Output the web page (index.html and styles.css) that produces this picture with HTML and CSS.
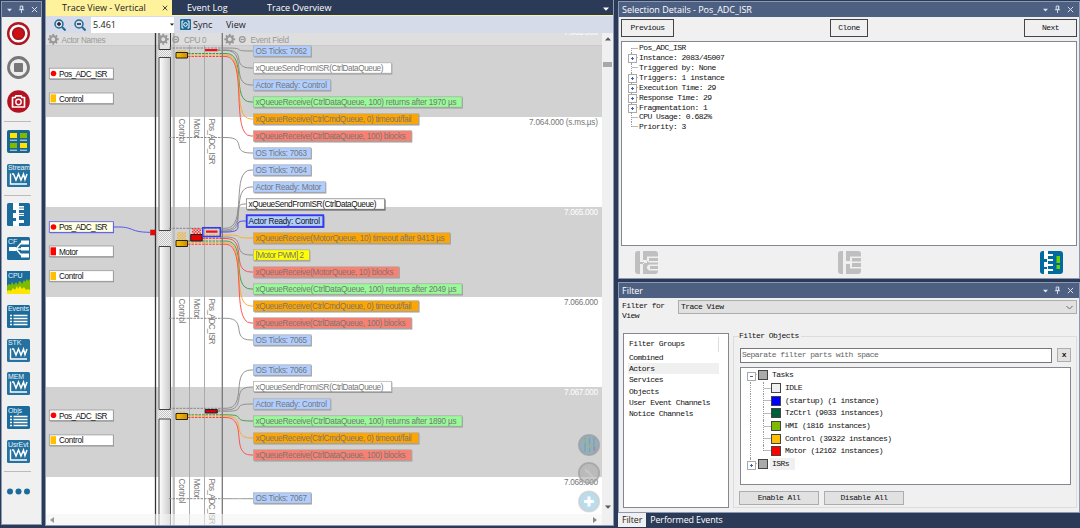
FILE: index.html
```html
<!DOCTYPE html>
<html lang="en">
    <head>
        <meta charset="utf-8">
        <title>Trace View</title>
        <link rel="stylesheet" href="styles.css">
    </head>
    <body>
        <svg class="defs" width="0" height="0">
            <symbol id="pin" viewBox="0 0 8 10"><path d="M2.5 1h3v4h-3zM1 5.3h6M4 5.3V9" fill="none" stroke="currentColor"/><path d="M5 1v4" stroke="currentColor"/></symbol>
            <symbol id="cross" viewBox="0 0 8 8"><path d="M1 1l6 6M7 1L1 7" fill="none" stroke="currentColor" stroke-width="1.1"/></symbol>
            <symbol id="down" viewBox="0 0 6 4"><path d="M0 .5h6L3 3.7z" fill="currentColor"/></symbol>
            <symbol id="gear" viewBox="-6 -6 12 12">
                <circle r="3.1" fill="none" stroke="#999" stroke-width="2.2"/>
                <path d="M0-5.7V-3.5M0 5.7V3.5M-5.7 0H-3.5M5.7 0H3.5M-4-4l1.5 1.5M4 4L2.5 2.5M-4 4l1.5-1.5M4-4L2.5-2.5" stroke="#999" stroke-width="1.9"/>
            </symbol>
            <symbol id="wave" viewBox="0 0 23 23">
                <rect width="23" height="23" rx="1.5" fill="#25719f"/>
                <path d="M3.500 9.500v10.500h16.500" fill="none" stroke="#fff" stroke-width="1.4"/>
                <path d="M5 10h1.500l2.500 6 2.500-6 2.500 6 2.500-6 1.500 5.500 2-5.500" fill="none" stroke="#fff" stroke-width="1.5"/>
            </symbol>
            <symbol id="lines" viewBox="0 0 23 23">
                <rect width="23" height="23" rx="1.5" fill="#1b6c9c"/>
                <path d="M3 10.500h2M3 13.500h2M3 16.500h2M3 19.500h2M6.500 10.500h14M6.500 13.500h14M6.500 16.500h14M6.500 19.500h14" stroke="#fff" stroke-width="1.5"/>
            </symbol>
        </svg>

        <aside class="toolbar">
            <div class="titlebar">
                <svg width="5" height="4"><use href="#down"/></svg>
                <svg width="7" height="9"><use href="#pin"/></svg>
                <svg width="7" height="7"><use href="#cross"/></svg>
            </div>
            <div class="tool"><svg viewBox="0 0 23 23"><circle cx="11.500" cy="11.500" r="10.300" fill="#fff" stroke="#b01622" stroke-width="2.400"/><circle cx="11.500" cy="11.500" r="5.700" fill="#d00f14" stroke="#a01520" stroke-width="1.800"/></svg></div>
            <div class="tool"><svg viewBox="0 0 23 23"><circle cx="11.500" cy="11.500" r="10" fill="#eee" stroke="#777" stroke-width="2.800"/><rect x="7" y="7" width="9" height="9" rx="1" fill="#777"/></svg></div>
            <div class="tool"><svg viewBox="0 0 23 23"><circle cx="11.500" cy="11.500" r="11.300" fill="#b31220"/><path d="M5.500 7.500H8l1-1.700h5l1 1.700h2.500V17h-12z" fill="none" stroke="#fff" stroke-width="1.700" stroke-linejoin="round"/><circle cx="11.500" cy="12" r="2.700" fill="none" stroke="#fff" stroke-width="1.400"/></svg></div>
            <hr>
            <div class="tool"><svg viewBox="0 0 23 23"><rect width="23" height="23" rx="2" fill="#1b668f"/><path d="M3 3h7v5H3zM13 13h7v5h-7z" fill="#ffe500"/><path d="M13 3h7v5h-7zM3 13h7v5H3z" fill="#7fba00"/><path d="M3 10.200h7M13 10.200h7M3 20.200h7M13 20.200h7" stroke="#d5e6ef"/></svg></div>
            <div class="tool"><svg><use href="#wave"/></svg><span>Stream</span></div>
            <hr>
            <div class="tool"><svg viewBox="0 0 23 23"><rect width="23" height="23" rx="1.500" fill="#1b6c9c"/><path d="M6 0h6v3h5v4h-5v3h5v3h-5v4h5v3h-5v3H6v-5h3v-3H6v-5h3V7H6z" fill="#fff"/><path d="M12 5h5M12 11.500h5" stroke="#1b6c9c" stroke-width=".8"/></svg></div>
            <div class="tool"><svg viewBox="0 0 23 23"><rect width="23" height="23" rx="1.500" fill="#1b6c9c"/><path d="M2 10h7v4H2zM14 3.500h8v4h-8zM14 10h8v3.500h-8zM14 16.500h8v4h-8z" fill="#fff"/><path d="M9 12h5M9 12l5-6M9 12l5 6" stroke="#fff" stroke-width="1.400"/></svg><span>CF</span></div>
            <div class="tool"><svg viewBox="0 0 23 23"><rect width="23" height="23" fill="#1b6c9c"/><path d="M0 15l2-2 2 1 1-3 2 3 2-3 2 3 1-4 2 1 1 2 2-4 1 2 2-3 1 2 2-2v13H0z" fill="#7fba00"/><path d="M0 20l2-1 2 1 2-3 2 2 2-4 1 3 2-3 2 3 2-2 2 3 2-1 2 1v4H0z" fill="#ffe500"/></svg><span>CPU</span></div>
            <div class="tool"><svg><use href="#lines"/></svg><span>Events</span></div>
            <div class="tool"><svg><use href="#wave"/></svg><span>STK</span></div>
            <div class="tool"><svg><use href="#wave"/></svg><span>MEM</span></div>
            <div class="tool"><svg><use href="#lines"/></svg><span>Objs</span></div>
            <div class="tool"><svg><use href="#wave"/></svg><span>UsrEvt</span></div>
            <hr>
            <div class="tool"><svg viewBox="0 0 23 23"><g fill="#1b6c9c"><circle cx="3" cy="11.500" r="3"/><circle cx="11.500" cy="11.500" r="3"/><circle cx="20" cy="11.500" r="3"/></g></svg></div>
        </aside>

        <main>
            <nav class="tabs">
                <a class="active">Trace View - Vertical <svg width="6" height="6"><use href="#cross"/></svg></a>
                <a class="log">Event Log</a>
                <a class="overview">Trace Overview</a>
                <svg class="more" width="6" height="4"><use href="#down"/></svg>
            </nav>
            <div class="controls">
                <svg width="12" height="12" viewBox="0 0 12 12"><g fill="none" stroke="#1f6b96" stroke-width="1.500"><circle cx="5" cy="5" r="4"/><path d="M8 8l3.500 3.500" stroke-width="2"/><path d="M3 5h4M5 3v4" stroke="#222"/></g></svg>
                <svg width="12" height="12" viewBox="0 0 12 12"><g fill="none" stroke="#1f6b96" stroke-width="1.500"><circle cx="5" cy="5" r="4"/><path d="M8 8l3.500 3.500" stroke-width="2"/><path d="M3 5h4" stroke="#222"/></g></svg>
                <div class="zoom">5.461 <svg width="4" height="3"><use href="#down"/></svg></div>
                <svg width="11" height="11" viewBox="0 0 11 11"><rect width="11" height="11" rx="1" fill="#1f6b96"/><path d="M3.500 2H2v7h1.500M7.500 2H9v7H7.500" fill="none" stroke="#fff"/><circle cx="5.500" cy="5.500" r="1.800" fill="none" stroke="#fff"/></svg>
                <span class="sync">Sync</span>
                <span>View</span>
            </div>
            <div class="trace">
                <svg id="canvas" width="556" height="492" viewBox="46 33 556 492">
                    <defs>
                        <linearGradient id="core"><stop offset="0" stop-color="#fff"/><stop offset="1" stop-color="#c8c8c8"/></linearGradient>
                        <linearGradient id="amber"><stop offset="0" stop-color="#ffc000"/><stop offset="1" stop-color="#c98f00"/></linearGradient>
                        <pattern id="dots" width="2" height="2" patternUnits="userSpaceOnUse"><path d="M0 0h1v1H0zM1 1h1v1H1z" fill="#c4c4c4"/></pattern>
                        <pattern id="amber-dots" width="3" height="3" patternUnits="userSpaceOnUse"><path d="M0 0h1.500v1.500H0zM1.500 1.500H3V3H1.500z" fill="#eeb73b"/></pattern>
                        <pattern id="red-dots" width="3" height="3" patternUnits="userSpaceOnUse"><path d="M0 0h1.500v1.500H0zM1.500 1.500H3V3H1.500z" fill="#f33"/></pattern>
                    </defs>
                    <rect x="46" y="33" width="556" height="492" fill="#fff"/>
                    <path d="M46 33h556v84H46zM46 207h556v90H46zM46 387h556v90H46z" fill="#d2d2d2"/>
                    <path d="M46 33h556v12H46z" fill="#dedede"/>
                    <path d="M46 45.500h556" stroke="#cacaca"/>

                    <path d="M158.500 33h12.500v492h-12.500z" fill="#f4f4f4"/>
                    <path d="M158.500 49h12.500v9h-12.500zM158.500 231h12.500v15h-12.500zM158.500 409.500h12.500v9h-12.500z" fill="url(#dots)"/>
                    <path d="M159 32h11.500v17.500H159z" fill="#e2e2e2" stroke="#333"/>
                    <path d="M159 57.500h11.500v173H159zM159 246.500h11.500v163H159zM159 419h11.500v110H159z" fill="url(#core)" stroke="#444"/>
                    <path d="M155.500 33v492" stroke="#333" stroke-width="1.300"/>
                    <path d="M173.800 33v492" stroke="#bbb" stroke-width="2.200"/>
                    <path d="M189.500 45v480M204.500 45v480" stroke="#aaa"/>
                    <path d="M222.300 33v492" stroke="#777" stroke-width="1.300"/>

                    <g class="heading">
                        <use href="#gear" x="47.500" y="33.500" width="11.500" height="11.500"/>
                        <text x="61.500" y="42.500" textLength="44">Actor Names</text>
                        <use href="#gear" x="157.500" y="33.500" width="11.500" height="11.500"/>
                        <use href="#gear" x="224" y="33.500" width="11.500" height="11.500"/>
                        <circle cx="175.700" cy="39.500" r="2.800"/><path d="M174.200 39.500h3"/>
                        <circle cx="242.300" cy="39.500" r="2.800"/><path d="M240.800 39.500h3"/>
                        <text x="184" y="42.500" textLength="22.500">CPU 0</text>
                        <text x="250.500" y="42.500" textLength="38.500">Event Field</text>
                    </g>

                    <g id="lanes"></g>
                    <g id="links"></g>
                    <g stroke="#222">
                        <path d="M176 52.500h11.500v5.500H176zM176 240.500h11.500v6H176zM176 413.500h11.500v6H176z" fill="url(#amber)"/>
                        <path d="M190.700 234.500h11.500v6.500h-11.500z" fill="#e60000"/>
                        <path d="M205.300 409.500h12v3.500h-12z" fill="#d40012"/>
                    </g>
                    <path d="M205 49h12.500v2.200H205zM206 230.500h11.500v2.200H206z" fill="#f0101c"/>
                    <path d="M177 50h9v2h-9zM177 232h9v8h-9zM177 411.500h9v1.500h-9z" fill="url(#amber-dots)"/>
                    <path d="M192 228h9v6h-9z" fill="url(#red-dots)"/>
                    <rect x="202.800" y="227.700" width="17.500" height="8.800" fill="none" stroke="#3a3aec" stroke-width="1.500"/>
                    <path d="M113.500 227h5C134 227 130 232.300 150 232.300" fill="none" stroke="#5555ef"/>
                    <rect x="150.500" y="230" width="5" height="5" fill="#f00" stroke="#822" stroke-width=".5"/>

                    <g id="actors"></g>
                    <g id="events"></g>
                    <g class="times">
                        <text class="light" x="598" y="35" textLength="34">7.063.000</text>
                        <text x="598" y="125.200" textLength="69">7.064.000 (s.ms.µs)</text>
                        <text class="light" x="598" y="215.200" textLength="34">7.065.000</text>
                        <text x="598" y="305.200" textLength="34">7.066.000</text>
                        <text class="light" x="598" y="395.200" textLength="34">7.067.000</text>
                        <text x="598" y="485.200" textLength="34">7.068.000</text>
                    </g>
                    <g stroke="#999" stroke-opacity=".65" stroke-width="1.800">
                        <circle cx="589" cy="445" r="10.200" fill="#8aa9b8" fill-opacity=".85"/>
                        <circle cx="589" cy="473" r="10.200" fill="#aaa" fill-opacity=".6"/>
                        <circle cx="589" cy="501.500" r="10.200" fill="#bbdcea" stroke="#ccc"/>
                        <path d="M585 438v14M589.500 438v14M594 438v12" stroke="#7795a5" stroke-width="1.200"/>
                        <path d="M584.500 439v4M589 444v4" stroke="#b7b26e"/><path d="M594.500 447v4" stroke="#b77d84"/>
                        <path d="M587 471l6 6M585.500 468.500l.5 3 3-.5" stroke="#ccc" fill="none"/>
                        <path d="M589 496.500v10M584 501.500h10" stroke="#fff" stroke-width="3" stroke-opacity="1"/>
                    </g>
                </svg>
                <div class="vscroll">
                    <svg width="6" height="4"><use href="#down"/></svg>
                    <i></i>
                    <svg width="6" height="4"><use href="#down"/></svg>
                </div>
                <div class="hscroll">
                    <svg width="4" height="6" viewBox="0 0 4 6"><path d="M4 0v6L0 3z" fill="#999"/></svg>
                    <svg width="4" height="6" viewBox="0 0 4 6"><path d="M0 0v6l4-3z" fill="#888"/></svg>
                </div>
            </div>
        </main>

        <div class="side">
            <section class="details">
                <div class="titlebar">
                    <h2>Selection Details - Pos_ADC_ISR</h2>
                    <svg width="5" height="4"><use href="#down"/></svg>
                    <svg width="7" height="9"><use href="#pin"/></svg>
                    <svg width="7" height="7"><use href="#cross"/></svg>
                </div>
                <div class="buttons">
                    <button>Previous</button>
                    <button class="clone">Clone</button>
                    <button>Next</button>
                </div>
                <ul class="tree">
                    <li>Pos_ADC_ISR</li>
                    <li class="plus">Instance: 2083/45007</li>
                    <li>Triggered by: None</li>
                    <li class="plus">Triggers: 1 instance</li>
                    <li class="plus">Execution Time: 29</li>
                    <li class="plus">Response Time: 29</li>
                    <li class="plus">Fragmentation: 1</li>
                    <li>CPU Usage: 0.682%</li>
                    <li>Priority: 3</li>
                </ul>
                <div class="views">
                    <svg viewBox="0 0 23 23"><rect width="23" height="23" rx="3" fill="#bfbfbf"/><path d="M5 0h3v9h4v3H8v11H5V13h4v-2H5zM12 5.500h11v1.500H14v3h9v1.500h-9l-2-2zM12 15.500l2-2h9V15h-8v3h8v1.500h-9l-2-2z" fill="#f0f0f0"/></svg>
                    <svg viewBox="0 0 23 23"><rect width="23" height="23" rx="3" fill="#bfbfbf"/><path d="M5 0h3v10h4V5.500h11V7h-9v3.500h9V12h-9v4h9v1.500H12V13H8v10H5z" fill="#f0f0f0"/></svg>
                    <svg viewBox="0 0 23 23"><rect width="23" height="23" rx="3" fill="#006b9f"/><path d="M4 0h4v3h5v2H8v3h5v2H8v3h5v2H8v3h5v2H8v3H4v-5h3v-2H4v-5h3V8H4z" fill="#fff"/><path d="M16.500 5H20v7h-3.500zM16.500 14H20v4h-3.500z" fill="#6fd000"/></svg>
                </div>
            </section>

            <section class="filter">
                <div class="titlebar">
                    <h2>Filter</h2>
                    <svg width="5" height="4"><use href="#down"/></svg>
                    <svg width="7" height="9"><use href="#pin"/></svg>
                    <svg width="7" height="7"><use href="#cross"/></svg>
                </div>
                <div class="target">
                    <label>Filter for View</label>
                    <div class="select">Trace View <svg width="7" height="5" viewBox="0 0 7 5"><path d="M.5 1l3 3 3-3" fill="none" stroke="#666"/></svg></div>
                </div>
                <div class="columns">
                    <ul class="groups">
                        <li class="head">Filter Groups</li>
                        <li>Combined</li>
                        <li class="selected">Actors</li>
                        <li>Services</li>
                        <li>Objects</li>
                        <li>User Event Channels</li>
                        <li>Notice Channels</li>
                    </ul>
                    <div class="objects">
                        <h3>Filter Objects</h3>
                        <div class="search">
                            <div class="input">Separate filter parts with space</div>
                            <button>x</button>
                        </div>
                        <ul class="tree tasks">
                            <li class="plus minus"><i class="grey"></i>Tasks</li>
                            <li class="child"><i class="idle"></i>IDLE</li>
                            <li class="child"><i class="startup"></i>(startup) (1 instance)</li>
                            <li class="child"><i class="tzctrl"></i>TzCtrl (9033 instances)</li>
                            <li class="child"><i class="hmi"></i>HMI (1816 instances)</li>
                            <li class="child"><i class="control"></i>Control (39322 instances)</li>
                            <li class="child last"><i class="motor"></i>Motor (12162 instances)</li>
                            <li class="plus"><i class="grey"></i><span>ISRs</span></li>
                        </ul>
                        <div class="all">
                            <button>Enable All</button>
                            <button>Disable All</button>
                        </div>
                    </div>
                </div>
            </section>
            <nav class="bottom">
                <a class="active">Filter</a>
                <a>Performed Events</a>
            </nav>
        </div>
        <script src="trace.js"></script>
    </body>
</html>
```

FILE: styles.css
```css
* {
    box-sizing: border-box;
}

body {
    width: 1080px;
    height: 528px;
    margin: 0;
    padding-left: 1px;
    display: flex;
    overflow: hidden;
    background-color: #2b3a56;
    font: 9px "Open Sans", "Noto Sans", sans-serif;
}

ul, h2, h3 {
    margin: 0;
    padding: 0;
    list-style: none;
    font-weight: normal;
}

svg {
    display: block;
    flex: none;
}

.defs {
    display: none;
}

.titlebar {
    display: flex;
    align-items: center;
    height: 15px;
    padding: 0 5px 0 3px;
    gap: 6px;
    color: #e0e5f0;
    background-color: #4d6082;
}

.titlebar h2 {
    flex: 1;
    font-size: 9px;
    color: #fff;
}

/* left toolbar */

.toolbar {
    width: 41px;
    height: 524px;
    margin-top: 1px;
    border: 1px solid #8c99b5;
    background-color: #f0f0f0;
}

.toolbar .titlebar {
    padding: 0 4px 0 5px;
    justify-content: space-between;
}

.toolbar hr {
    width: 27px;
    height: 6px;
    margin: 0 0 0 2px;
    border: 0;
    background: linear-gradient(#bbb, #bbb) 0 3px / 100% 1px no-repeat;
}

.tool {
    position: relative;
    display: flex;
    align-items: center;
    width: 33px;
    height: 33.8px;
    padding-left: 5px;
}

.tool svg {
    width: 23px;
    height: 23px;
}

.tool span {
    position: absolute;
    left: 6px;
    top: 6px;
    width: 24px;
    font: 7px/8px "Liberation Sans", sans-serif;
    letter-spacing: -.1px;
    color: #e8f3f9;
}

/* trace view */

main {
    width: 569px;
    height: 526px;
    margin-left: 3px;
    border: 1px solid #8c99b5;
    border-top: 0;
}

.tabs {
    display: flex;
    align-items: center;
    height: 16px;
    color: #fff;
    border-bottom: 1px solid #fff29d;
}

.tabs a {
    line-height: 16px;
    font-size: 9px;
    white-space: nowrap;
}

.tabs .active {
    display: flex;
    align-items: center;
    justify-content: space-between;
    width: 126px;
    height: 16px;
    padding: 0 4px 0 16px;
    color: #222;
    background-color: #fff29d;
}

.tabs .log {
    width: 80px;
    margin-left: 15px;
}

.tabs .more {
    margin: 2px 4px 0 auto;
}

.controls {
    display: flex;
    align-items: center;
    height: 17px;
    padding-left: 8px;
    gap: 8px;
    font-size: 9px;
    color: #222;
    background-color: #d6dbe9;
}

.zoom {
    display: flex;
    align-items: center;
    justify-content: space-between;
    width: 83px;
    height: 16px;
    margin: 0 -2px 0 -3px;
    padding-left: 2px;
    background-color: #fff;
}

.sync {
    width: 25px;
    margin-left: -6px;
}

.trace {
    display: grid;
    grid-template: 481px 11px / 556px 11px;
    background-color: #f0f0f0;
}

#canvas {
    grid-area: 1 / 1 / 3 / 2;
}

.vscroll {
    grid-area: 1 / 2 / 3 / 3;
    display: flex;
    flex-direction: column;
    align-items: center;
    padding: 4px 0 16px;
    color: #555;
}

.vscroll svg:first-child {
    transform: rotate(180deg);
}

.vscroll i {
    width: 9px;
    height: 5px;
    margin: 21px 0 auto;
    background-color: #a8a8a8;
}

/* translucent, the lanes run on below it */
.hscroll {
    grid-area: 2 / 1;
    z-index: 1;
    display: flex;
    align-items: center;
    justify-content: space-between;
    padding: 0 5px 0 4px;
    background-color: rgba(244, 244, 244, .6);
}

#canvas text {
    font: 8.2px "Liberation Sans", sans-serif;
    fill: #777;
}

#canvas .heading circle, #canvas .heading path {
    fill: none;
    stroke: #999;
    stroke-width: 1.3;
}

#canvas .heading text {
    fill: #999;
}

#canvas .times text {
    text-anchor: end;
    fill: #777;
}

#canvas .times .light {
    fill: #fff;
}

#canvas .dark {
    fill: #111;
}

/* right side */

.side {
    width: 462px;
    margin: 1px 0 0 4px;
    font: 8px/10px "Liberation Mono", monospace;
    letter-spacing: -.54px;
    color: #111;
}

.side h2 {
    font-family: "Open Sans", "Noto Sans", sans-serif;
    letter-spacing: -.02px;
}

.side button {
    padding: 0;
    font: inherit;
    letter-spacing: inherit;
    color: #111;
    background-color: #f0f0f0;
    border: 1px solid #444;
}

.details, .filter {
    border: 1px solid #8c99b5;
    background-color: #f0f0f0;
}

.details {
    height: 278px;
}

.details .buttons {
    display: flex;
    justify-content: space-between;
    padding: 2px 2px 0;
}

.buttons button {
    width: 53px;
    height: 18px;
}

.buttons .clone {
    width: 38px;
}

.tree {
    margin: 4px 2px 0;
    padding-top: 1px;
    border: 1px solid #828790;
    background-color: #fff;
}

.details .tree {
    height: 205px;
}

.tree li {
    position: relative;
    height: 9.93px;
    padding-left: 17px;
    white-space: nowrap;
}

/* dotted tree guides */
.tree li::before {
    content: "";
    position: absolute;
    left: 9px;
    top: 0;
    width: 6px;
    height: 100%;
    border-left: 1px dotted #999;
    background: linear-gradient(#bbb, #bbb) 0 50% / 100% 1px no-repeat;
}

.tree li:first-child::before {
    top: 5px;
    height: 50%;
    background-position: 0 0;
}

.tree li:last-child::before {
    height: 50%;
    background-position: 0 100%;
}

.tree .plus::after {
    content: "";
    position: absolute;
    left: 6px;
    top: 1px;
    width: 7px;
    height: 7px;
    border: 1px solid #aaa;
    background: linear-gradient(#3b62b0, #3b62b0) 50% 50% / 3px 1px no-repeat, linear-gradient(#3b62b0, #3b62b0) 50% 50% / 1px 3px no-repeat, #fff;
}

.views {
    display: flex;
    justify-content: space-between;
    padding: 5px 16px 0;
}

.views svg {
    width: 23px;
    height: 23px;
}

.filter {
    height: 231px;
    margin-top: 3px;
}

.target {
    display: flex;
    height: 35px;
    padding: 2px 2px 0 3px;
}

.target label {
    width: 45px;
    margin: 1px 11px 0 0;
}

.select {
    display: flex;
    align-items: center;
    justify-content: space-between;
    flex: 1;
    height: 14px;
    padding: 0 3px 0 2px;
    border: 1px solid #adadad;
    background-color: #e1e1e1;
}

.columns {
    display: flex;
    gap: 4px;
    padding: 0 2px 0 4px;
}

.groups {
    width: 107px;
    height: 175px;
    border: 1px solid #828790;
    background-color: #fff;
    padding: 3px 0 0 4px;
}

.groups li {
    width: 91px;
    height: 11.4px;
    line-height: 12px;
    padding-left: 1px;
    white-space: nowrap;
}

.groups .head {
    height: 14.5px;
    line-height: 13px;
    border-right: 1px solid #ddd;
}

.groups .selected {
    background-color: #f0f0f0;
}

.objects {
    width: 344px;
    height: 172px;
    margin-top: 3px;
    padding: 0 6px;
    border: 1px solid #dcdcdc;
}

.objects h3 {
    width: 62px;
    height: 11px;
    margin: -6px 0 6px -1px;
    font-size: 8px;
    background-color: #f0f0f0;
}

.search {
    display: flex;
    justify-content: space-between;
    width: 331px;
}

.search .input {
    width: 312px;
    height: 15px;
    padding: 1px;
    color: #666;
    border: 1px solid #777;
    background-color: #fff;
}

.search button {
    width: 14px;
    height: 14px;
    font-weight: bold;
    border-color: #adadad;
    background-color: #e1e1e1;
}

.tasks {
    width: 331px;
    height: 118px;
    margin-left: 0;
}

.tasks li {
    display: flex;
    align-items: center;
    gap: 4px;
    height: 12.7px;
}

.tasks i {
    width: 10px;
    height: 10px;
    border: 1px solid #444;
}

.tasks .child {
    padding-left: 30px;
}

.tasks .child::before {
    width: 1px;
    background: none;
}

.tasks .child::after {
    content: "";
    position: absolute;
    left: 22px;
    top: 0;
    width: 7px;
    height: 100%;
    border-left: 1px dotted #999;
    background: linear-gradient(#bbb, #bbb) 0 50% / 100% 1px no-repeat;
}

.tasks .last::after {
    height: 50%;
    background-position: 0 100%;
}

.tasks .plus::after {
    top: 3px;
}

.tasks .minus::after {
    background: linear-gradient(#3b62b0, #3b62b0) 50% 50% / 3px 1px no-repeat, #fff;
}

.tasks span {
    margin-left: -2px;
    padding: 1px 6px 1px 2px;
    background-color: #f0f0f0;
}

.grey { background-color: #aaa; }
.idle { background-color: #f0f0f0; }
.startup { background-color: #00f; }
.tzctrl { background-color: #005e3c; }
.hmi { background-color: #7fba00; }
.control { background-color: #ffc000; }
.motor { background-color: #f00; }

.all {
    display: flex;
    gap: 5px;
    margin: 6px 0 0 -1px;
}

.all button {
    width: 80px;
    height: 14px;
    border-color: #adadad;
    background-color: #e1e1e1;
}

.bottom {
    display: flex;
    font: 8.9px/14px "Open Sans", "Noto Sans", sans-serif;
    letter-spacing: -.1px;
}

.bottom a {
    height: 14px;
    padding: 0 4px;
    color: #fff;
}

.bottom .active {
    color: #222;
    background-color: #f0f0f0;
}
```

FILE: trace.js
```js
const NS = 'http://www.w3.org/2000/svg';
const BLUE = '#b0ceff', WHITE = '#fff', GREEN = '#98fb98', ORANGE = '#ffa500', SALMON = '#fa8072';

const draw = (parent, name, attributes, text) => {
    const element = document.createElementNS(NS, name);
    for (const key in attributes) element.setAttribute(key, attributes[key]);
    if (text) element.textContent = text;
    document.getElementById(parent).append(element);
    return element;
}

// middle, right edge, text width, fill, label
const events = [
    [51, 311, 51.5, BLUE, 'OS Ticks: 7062'],
    [68, 391.5, 128, WHITE, 'xQueueSendFromISR(CtrlDataQueue)'],
    [85, 330.5, 71.5, BLUE, 'Actor Ready: Control'],
    [102, 462, 201, GREEN, 'xQueueReceive(CtrlDataQueue, 100) returns after 1970 µs'],
    [119, 418.7, 156, ORANGE, 'xQueueReceive(CtrlCmdQueue, 0) timeout/fail'],
    [136, 411.5, 150, SALMON, 'xQueueReceive(CtrlDataQueue, 100) blocks'],
    [153, 311, 51.5, BLUE, 'OS Ticks: 7063'],
    [170, 311, 51.5, BLUE, 'OS Ticks: 7064'],
    [187, 325.5, 66, BLUE, 'Actor Ready: Motor'],
    [238, 450, 189, ORANGE, 'xQueueReceive(MotorQueue, 10) timeout after 9413 µs'],
    [255, 309.5, 48.5, '#ff0', '[Motor PWM] 2'],
    [272, 399, 138, SALMON, 'xQueueReceive(MotorQueue, 10) blocks'],
    [289, 462, 201, GREEN, 'xQueueReceive(CtrlDataQueue, 100) returns after 2049 µs'],
    [306, 418.7, 156, ORANGE, 'xQueueReceive(CtrlCmdQueue, 0) timeout/fail'],
    [323, 411.5, 150, SALMON, 'xQueueReceive(CtrlDataQueue, 100) blocks'],
    [340, 311, 51.5, BLUE, 'OS Ticks: 7065'],
    [370, 311, 51.5, BLUE, 'OS Ticks: 7066'],
    [386.5, 391.5, 128, WHITE, 'xQueueSendFromISR(CtrlDataQueue)'],
    [404, 330.5, 71.5, BLUE, 'Actor Ready: Control'],
    [421, 462, 201, GREEN, 'xQueueReceive(CtrlDataQueue, 100) returns after 1890 µs'],
    [438, 418.7, 156, ORANGE, 'xQueueReceive(CtrlCmdQueue, 0) timeout/fail'],
    [455, 411.5, 150, SALMON, 'xQueueReceive(CtrlDataQueue, 100) blocks'],
    [498, 311, 51.5, BLUE, 'OS Ticks: 7067'],
    [204, 384.7, 128, WHITE, 'xQueueSendFromISR(CtrlDataQueue)', 246.5, 'dark'],
    [221, 323.5, 71.5, BLUE, 'Actor Ready: Control', 246.5, 'dark']
];

for (const [y, right, length, fill, label, x = 253.5, style = ''] of events) {
    draw('events', 'rect', { x: x + .8, y: y - 4.5, width: right - x, height: 11, fill: style ? '#555' : '#999' });
    draw('events', 'rect', { x, y: y - 5.2, width: right - x, height: 10.4, fill, stroke: style ? '#777' : '#aaa', 'stroke-width': .7 });
    draw('events', 'text', { x: x + 2, y: y + 3, textLength: length, class: style }, label);
}
draw('events', 'rect', { x: 246.7, y: 215.2, width: 76.6, height: 11.8, fill: 'none', stroke: '#3838f0', 'stroke-width': 1.8 });

// lane x, from y, to y, colour, label x
const links = [
    [169, 48, 51, '#888'], [218, 50, 68, '#888'], [218, 50.5, 85, '#888'],
    [188, 53.5, 102, '#3a9a3a'], [188, 55, 119, '#ffa51f'], [188, 56.5, 136, '#f44'],
    [169, 137.5, 153, '#888'],
    [169, 228.3, 170, '#888'], [220, 230, 187, '#888'], [220, 231, 204, '#888', 246],
    [202, 235, 238, '#ffa51f'], [202, 237, 255, '#888'], [202, 238.5, 272, '#f44'],
    [188, 241, 289, '#3a9a3a'], [188, 242.7, 306, '#ffa51f'], [188, 244.3, 323, '#f44'],
    [220, 232, 221, '#3a3aec', 246],
    [169, 318.3, 340, '#888'],
    [169, 408.3, 370, '#888'], [218, 410, 387, '#888'], [218, 411.3, 404, '#888'],
    [188, 414.8, 421, '#3a9a3a'], [188, 416, 438, '#ffa51f'], [188, 417.5, 455, '#f44'],
    [169, 498.7, 498.7, '#888']
];

for (const [lane, from, to, stroke, x = 253] of links) {
    draw('links', 'path', { d: `M${lane} ${from}H223`, stroke, 'stroke-dasharray': '2.5 1' });
    draw('links', 'path', { d: `M223 ${from}H226C248 ${from} 230 ${to} ${x - 2} ${to}H${x}`, stroke, fill: 'none', 'stroke-width': .9 });
}

for (const y of [118.5, 298.5, 478.5]) {
    draw('lanes', 'text', { transform: `translate(179 ${y}) rotate(90)`, textLength: 25 }, 'Control');
    draw('lanes', 'text', { transform: `translate(194 ${y}) rotate(90)`, textLength: 20 }, 'Motor');
    draw('lanes', 'text', { transform: `translate(209 ${y}) rotate(90)`, textLength: 46 }, 'Pos_ADC_ISR');
}

const actors = [
    [73.5, 'Pos_ADC_ISR'], [98.3, 'Control'],
    [227, 'Pos_ADC_ISR', true], [251.3, 'Motor'], [276, 'Control'],
    [415.3, 'Pos_ADC_ISR'], [440.2, 'Control']
];

for (const [y, name, selected] of actors) {
    const isr = name === 'Pos_ADC_ISR';
    draw('actors', 'rect', { x: 49.8, y: y - 4.8, width: 64.2, height: 11, fill: selected ? '#5555ef' : '#888' });
    draw('actors', 'rect', { x: 49.3, y: y - 5.3, width: 64, height: 10.6, fill: selected ? '#ffffe1' : '#fff', stroke: selected ? '#5555ef' : '#999', 'stroke-width': .8 });
    if (isr) draw('actors', 'circle', { cx: 53.5, cy: y, r: 2.8, fill: '#f00' });
    else draw('actors', 'rect', { x: 50.5, y: y - 4, width: 5.5, height: 8, fill: name === 'Motor' ? '#f00' : '#ffc000' });
    draw('actors', 'text', { x: 59, y: y + 3.2, textLength: isr ? 48.5 : name === 'Motor' ? 19 : 24.5, class: 'dark' }, name);
}
```
